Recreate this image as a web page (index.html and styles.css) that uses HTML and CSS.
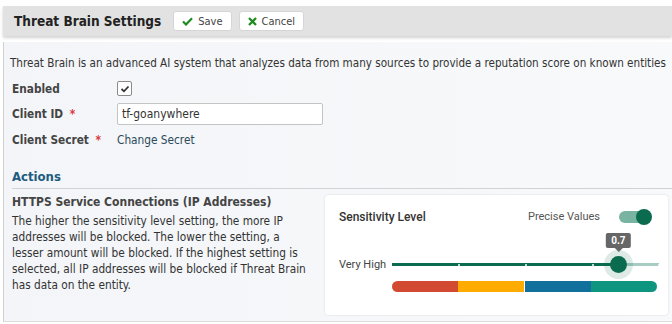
FILE: index.html
```html
<!DOCTYPE HTML>
<html>
<head>
<link rel="stylesheet" href="styles.css">
</head>
<body>
<div class="header">
    <h1 class="title">Threat Brain Settings</h1>
    <button class="btn" type="button">
        <svg width="11" height="9" viewBox="0 0 11 9"><path d="M1 4.5 L4 7.5 L10 1.2" fill="none" stroke="#1f8a1f" stroke-width="2.2"/></svg>
        Save
    </button>
    <button class="btn" type="button">
        <svg width="9" height="9" viewBox="0 0 9 9"><path d="M1 1 L8 8 M8 1 L1 8" fill="none" stroke="#1f8a1f" stroke-width="2.3"/></svg>
        Cancel
    </button>
</div>

<div class="panel">
    <p class="intro">Threat Brain is an advanced AI system that analyzes data from many sources to provide a reputation score on known entities</p>

    <div class="form-grid">
        <label class="field-label">Enabled</label>
        <div class="field">
            <span class="checkbox">
                <svg width="10" height="8" viewBox="0 0 10 8"><path d="M1.5 4 L4 6.3 L8.5 1.5" fill="none" stroke="#333" stroke-width="1.8"/></svg>
            </span>
        </div>

        <label class="field-label">Client ID <span class="req">*</span></label>
        <div class="field"><input class="text-input" type="text" value="tf-goanywhere"></div>

        <label class="field-label">Client Secret <span class="req">*</span></label>
        <div class="field"><span class="link">Change Secret</span></div>
    </div>

    <h2 class="section-title">Actions</h2>

    <div class="action-row">
        <div class="action-text">
            <h3>HTTPS Service Connections (IP Addresses)</h3>
            <p>The higher the sensitivity level setting, the more IP addresses will be blocked. The lower the setting, a lesser amount will be blocked. If the highest setting is selected, all IP addresses will be blocked if Threat Brain has data on the entity.</p>
        </div>

        <div class="card">
            <div class="card-head">
                <span class="card-title">Sensitivity Level</span>
                <span class="precise">Precise Values</span>
                <span class="toggle"><span class="knob"></span></span>
            </div>
            <div class="slider-row">
                <span class="slider-label">Very High</span>
                <div class="track">
                    <div class="track-fill" style="width: 84.6%"></div>
                    <span class="tick" style="left: 24.7%"></span>
                    <span class="tick" style="left: 49.8%"></span>
                    <span class="tick" style="left: 74.9%"></span>
                    <span class="tick" style="left: 99.5%"></span>
                    <span class="thumb" style="left: 84.6%">
                        <span class="tip">0.7</span>
                    </span>
                </div>
            </div>
            <div class="levels">
                <span class="lvl red"></span>
                <span class="lvl orange"></span>
                <span class="lvl blue"></span>
                <span class="lvl teal"></span>
            </div>
        </div>
    </div>
</div>
</body>
</html>
```

FILE: styles.css
```css
body {
    margin: 0;
    padding: 6px 0 0 3px;
    background: #fff;
    color: #333;
    font-family: "DejaVu Sans Condensed", "Liberation Sans", sans-serif;
    font-size: 11.75px;
}

.header {
    display: flex;
    align-items: center;
    height: 30px;
    padding-left: 11px;
    background: #e2e2e2;
    box-shadow: 0 2px 3px rgba(0, 0, 0, 0.18);
}

.title {
    margin: 0 12px 0 0;
    font-size: 13.5px;
    font-weight: bold;
    color: #222;
}

.btn {
    display: flex;
    align-items: center;
    gap: 5px;
    height: 20px;
    margin-right: 7px;
    padding: 0 8px;
    border: 1px solid #d6d6d6;
    border-radius: 3px;
    background: #fff;
    color: #444;
    font-family: inherit;
    font-size: 11px;
}

.panel {
    margin-top: 6px;
    padding: 14px 0 8px 6px;
    border-left: 1px solid #d0d0d0;
    border-bottom: 1px solid #dcdcdc;
    background: linear-gradient(90deg, #f3f5f8, #f8f9fb);
    height: 257px;
}

.intro {
    margin: 0 0 6px;
    white-space: nowrap;
    font-size: 11.6px;
    color: #333;
}

.form-grid {
    display: grid;
    grid-template-columns: 105px 206px;
    grid-auto-rows: 25.5px;
    align-items: center;
    padding-left: 2px;
}

.field-label {
    font-weight: bold;
    color: #444;
}

.req {
    color: #d9363e;
    margin-left: 3px;
}

.checkbox {
    display: flex;
    align-items: center;
    justify-content: center;
    width: 13px;
    height: 13px;
    border: 1px solid #8a8a8a;
    border-radius: 2px;
    background: #fff;
}

.text-input {
    box-sizing: border-box;
    width: 206px;
    height: 22px;
    padding: 0 4px;
    border: 1px solid #c4c4c4;
    border-radius: 2px;
    font-family: inherit;
    font-size: 12px;
    color: #333;
}

.link {
    color: #2c4a5a;
}

.section-title {
    margin: 16px 0 0 2px;
    padding-bottom: 4px;
    border-bottom: 1px solid #cfd3d6;
    font-size: 13px;
    color: #1d5b7f;
}

.action-row {
    display: flex;
    gap: 14px;
    padding: 6px 4px 0 2px;
}

.action-text {
    width: 299px;
}

.action-text h3 {
    margin: 0 0 4px;
    font-size: 12px;
    color: #444;
}

.action-text p {
    margin: 0;
    line-height: 16px;
    color: #333;
}

.card {
    flex: 1;
    height: 120px;
    padding: 0 9px 0 14px;
    background: #fff;
    border-radius: 3px;
    box-shadow: 0 0 2px rgba(0, 0, 0, 0.15);
    font-family: Roboto, "Liberation Sans", sans-serif;
}

.card-head {
    display: flex;
    align-items: center;
    height: 16px;
    margin-top: 14px;
}

.card-title {
    flex: 1;
    font-size: 12px;
    font-weight: 500;
    color: #333;
}

.precise {
    font-size: 11px;
    color: #555;
    margin-right: 19px;
}

.toggle {
    position: relative;
    width: 32px;
    height: 12px;
    margin-right: 8px;
    border-radius: 6px;
    background: #79b4a3;
}

.toggle .knob {
    position: absolute;
    right: -1px;
    top: -2px;
    width: 16px;
    height: 16px;
    border-radius: 50%;
    background: #0b6b4e;
}

.slider-row {
    display: flex;
    align-items: center;
    margin-top: 33px;
}

.slider-label {
    width: 53px;
    font-size: 11px;
    color: #444;
}

.track {
    position: relative;
    flex: 1;
    height: 3px;
    background: #a7ccc1;
}

.track-fill {
    height: 100%;
    background: #0b6b4e;
}

.tick {
    position: absolute;
    top: 1px;
    width: 2px;
    height: 2px;
    border-radius: 50%;
    background: #fff;
}

.tick:last-of-type {
    background: #0b6b4e;
}

.thumb {
    position: absolute;
    top: -7px;
    width: 17px;
    height: 17px;
    margin-left: -8px;
    border-radius: 50%;
    background: #0b6b4e;
    box-shadow: 0 0 0 6px rgba(11, 107, 78, 0.14);
}

.tip {
    position: absolute;
    left: 50%;
    bottom: 25px;
    transform: translateX(-50%);
    padding: 1px 5px;
    border-radius: 2px;
    background: #666;
    color: #fff;
    font-size: 10px;
    font-weight: bold;
    line-height: 13px;
}

.tip::after {
    content: "";
    position: absolute;
    left: 50%;
    bottom: -4px;
    margin-left: -4px;
    border-left: 4px solid transparent;
    border-right: 4px solid transparent;
    border-top: 4px solid #666;
}

.levels {
    display: flex;
    height: 11px;
    margin: 10px 2px 0 53px;
    border-radius: 6px;
    overflow: hidden;
}

.lvl {
    flex: 1;
}

.red { background: #d24a31; }
.orange { background: #ffab00; border-right: 1px solid #fff; }
.blue { background: #12709c; }
.teal { background: #0d957f; }
```
